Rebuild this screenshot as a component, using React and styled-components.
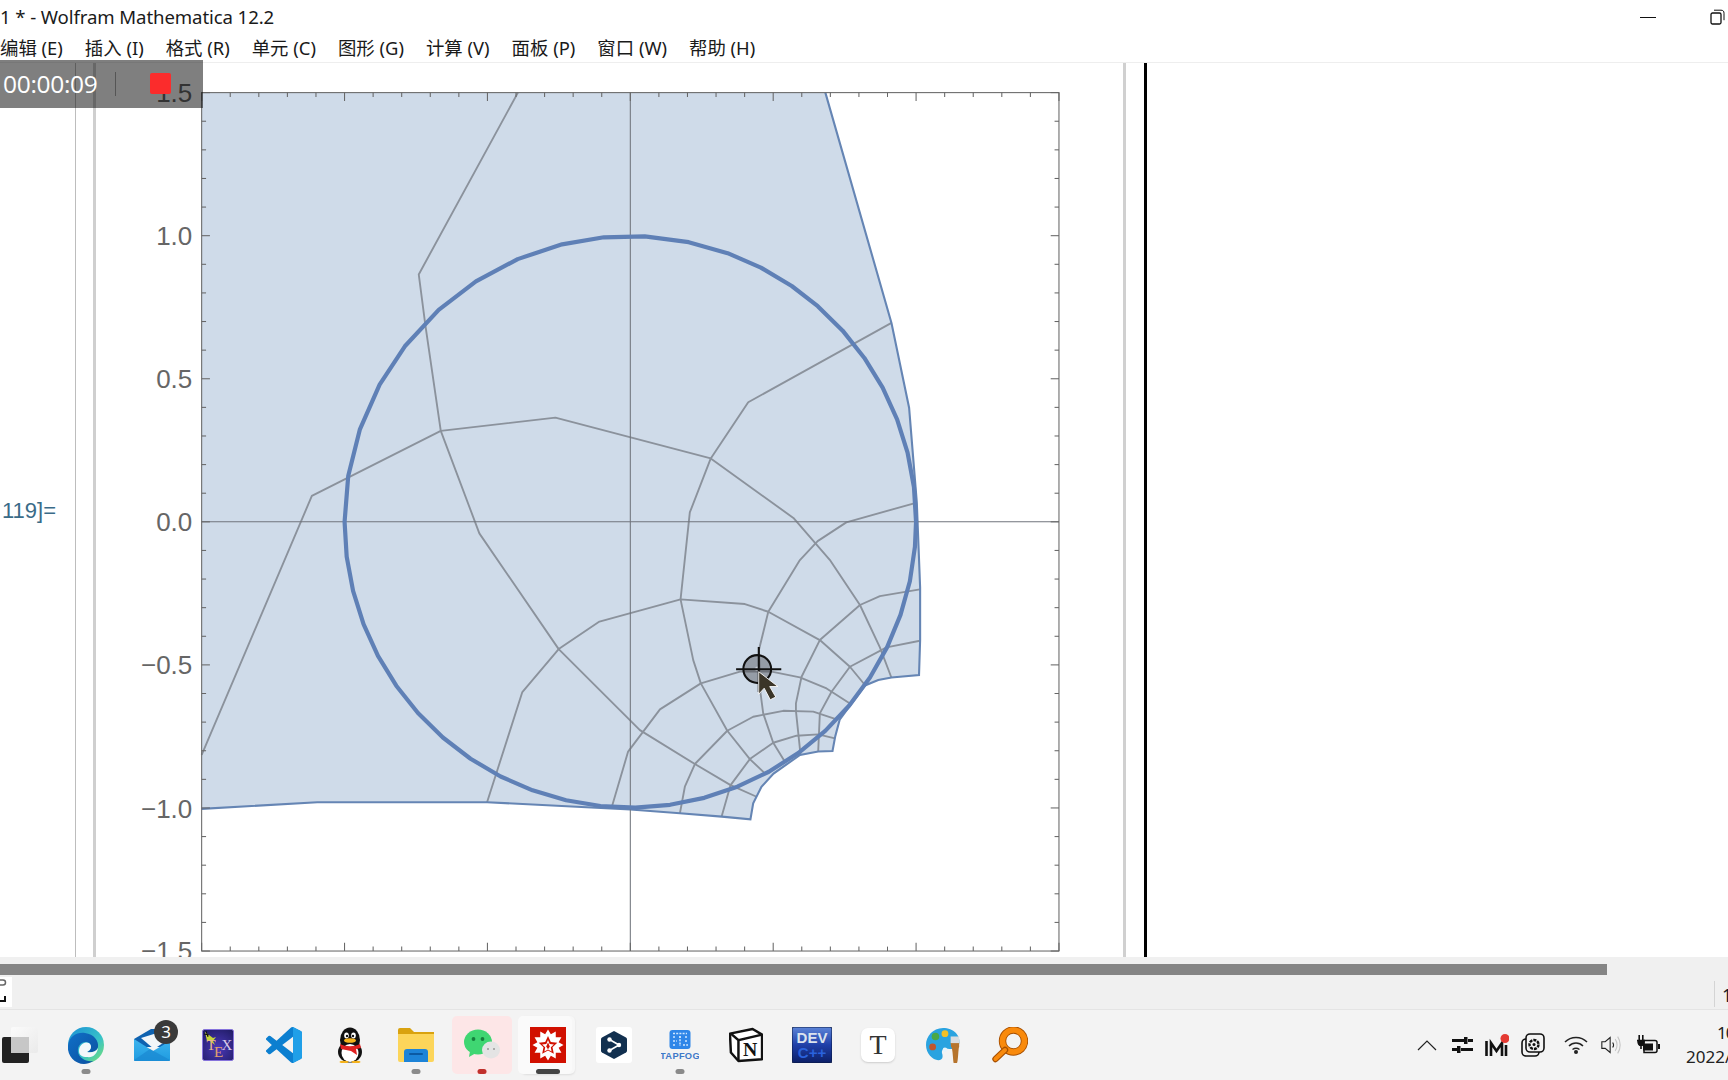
import React from "react";
import styled, { createGlobalStyle } from "styled-components";

const Global = createGlobalStyle`
  html, body { margin: 0; padding: 0; width: 1728px; height: 1080px; overflow: hidden; background: #fff; }
  * { box-sizing: border-box; }
`;

const UI_FONT = `"Noto Sans", "Noto Sans CJK SC", sans-serif`;

const App_ = styled.div`
  position: relative; width: 1728px; height: 1080px; overflow: hidden;
  display: flex; flex-direction: column; background: #fff; font-family: ${UI_FONT}; color: #1a1a1a;
`;
const TitleBar = styled.div`
  height: 34px; display: flex; align-items: center; justify-content: space-between; flex: none;
`;
const TitleText = styled.div`font-size: 18.6px; line-height: 34px; white-space: nowrap; letter-spacing: -0.1px;`;
const WindowControls = styled.div`display: flex; align-items: center; gap: 54px; padding-right: 3px;`;
const MinimizeGlyph = styled.div`width: 16px; height: 1px; background: #111;`;
const MenuBar = styled.div`
  height: 29px; display: flex; align-items: center; gap: 22px; flex: none;
  border-bottom: 1px solid #eeeeee;
`;
const MenuItem = styled.div`font-size: 18.4px; line-height: 26px; white-space: nowrap;`;
const Workspace = styled.div`height: 894px; flex: none; display: flex; overflow: hidden;`;
const Gutter = styled.div`
  width: 75px; flex: none; padding: 434px 0 0 2px; font-family: "Liberation Sans", sans-serif;
  font-size: 22px; line-height: 28px; color: #3a6b88;
`;
const CellLine = styled.div`
  flex: none; height: 100%; width: ${p => p.$w}px; background: ${p => p.$c}; margin-right: ${p => p.$after}px;
`;
const PlotWrap = styled.div`width: 1026px; height: 894px; flex: none; overflow: hidden;`;
const ScrollTrack = styled.div`height: 18px; flex: none; background: #f0f0f0; padding-top: 7px;`;
const ScrollThumb = styled.div`width: 1607px; height: 11px; background: #858585;`;
const StatusBar = styled.div`
  height: 35px; flex: none; background: #f0f0f0; border-bottom: 1px solid #e4e4e4;
  display: flex; align-items: center; justify-content: space-between;
`;
const StatusBox = styled.div`width: 12px; height: 30px; background: #fff; display: flex;`;
const StatusRight = styled.div`
  width: 14px; height: 26px; border-left: 1px solid #d4d4d4; padding-left: 7px;
  font-size: 18px; line-height: 28px; color: #1a1a2a; white-space: nowrap; margin-top: 4px;
`;
const TaskBar = styled.div`
  height: 70px; flex: none; background: #f3f3f3; display: flex; position: relative; align-items: stretch;
`;
const StartSlot = styled.div`width: 53px; flex: none; display: flex; align-items: center; padding: 0 13px 0 0; justify-content: center;`;
const Slot = styled.div`
  position: relative; width: 66px; flex: none; display: flex; align-items: center; justify-content: center;
`;
const Tile = styled.div`
  position: absolute; top: 6px; bottom: 6px; left: 3px; right: 3px; border-radius: 5px;
  background: ${p => p.$pink ? "#fde6e7" : "#fafafa"};
  box-shadow: ${p => p.$pink ? "none" : "3px 0 0 #f7f7f7, 3px 1px 2px #ddd"};
  width: ${p => p.$pink ? "60px" : "54px"};
`;
const IconHolder = styled.div`position: relative; width: 40px; height: 40px; display: flex; align-items: center; justify-content: center;`;
const Badge = styled.div`
  position: absolute; top: -5px; right: -6px; width: 24px; height: 24px; border-radius: 50%;
  background: #3a3a3a; color: #fff; font-size: 17px; line-height: 24px; text-align: center;
`;
const RunDot = styled.div`
  position: absolute; bottom: 6px; left: 50%; transform: translateX(-50%);
  height: 5px; border-radius: 3px; width: ${p => p.$wide ? "24px" : "9px"}; background: ${p => p.$c};
`;
const Tray = styled.div`
  position: absolute; left: 1409px; top: 0; height: 70px; display: flex; align-items: center;
`;
const TraySlot = styled.div`width: ${p => p.$w}px; display: flex; justify-content: center; flex: none;`;
const Clock = styled.div`
  position: absolute; left: 1686px; top: 11px; width: 42px; height: 50px; overflow: hidden;
  font-size: 17px; line-height: 24px; color: #222; white-space: nowrap;
`;
const ClockTime = styled.div`padding-left: 31px; letter-spacing: -1px;`;
const Recorder = styled.div`
  position: absolute; top: 60px; left: 0; width: 203px; height: 48px; background: rgba(0,0,0,.5);
  display: flex; align-items: center; color: #fff; padding-left: 3px;
`;
const RecTime = styled.div`
  width: 112px; font-size: 24.5px; line-height: 48px; letter-spacing: -0.3px; font-family: "Open Sans", sans-serif; white-space: nowrap;
`;
const RecSep = styled.div`width: 1px; height: 24px; background: #555;`;
const RecStop = styled.div`width: 21px; height: 21px; margin-left: 34px; margin-top: -2px; border-radius: 2px; background: #fb2c2c;`;

/* ---------- plot ---------- */
const X0 = 572, Y0 = 473.5, U = 259.33, L = 183, R = 961, T = 84, B = 863;
const FILL = [[183,84],[749,84],[809,293],[825,370],[832,456],[835,533],[835,581],[834,612.6],[809,614.7],[797,617],[785,622],[762,653],[758,668],[755.5,681.5],[742.5,682],[726,685],[702,702],[691,714],[683.5,729],[681,743.5],[655,741],[617,738],[572,734.5],[442,728],[365,728],[288,728],[183,734]];
const GRID = [
  [[470,84],[380,249],[386,295],[400,391],[435,484],[507,589],[580.7,662.5],[630.6,693.3],[663,712.4],[686.6,723]],
  [[183,685],[283,450],[400,391],[504,379],[645,416],[720,470],[753,508],[780.4,549],[798.5,587.5],[809,615]],
  [[809,293],[679,365],[645,416],[626,465],[617.6,543.9],[629.1,599],[636,620.1],[660,663.1],[680.5,688.8],[694.1,701.8]],
  [[832,456],[768,474],[742,491],[725.9,508.2],[697.2,555.1],[688.7,589.9],[690.2,629.2],[692.6,647.3],[701.7,674],[712.3,691.2]],
  [[834.8,534.8],[798.5,540.9],[780.4,549],[744,580.8],[727.4,614.1],[722.3,638.3],[722.3,645],[726.5,685]],
  [[834.8,581.4],[804.5,587.5],[771.3,605],[754.6,627.7],[744,647.3],[742.5,682]],
  [[442,728],[474,628],[507,589],[544,564],[617.6,543.9],[676,548.1],[697.2,555.1],[744,580.8],[771.3,605],[784.9,621.6]],
  [[555,733],[570,682],[598.9,643.7],[636,620.1],[671.5,609.5],[700.2,609.5],[725.9,614.7],[750.1,624.7],[771.3,638.3]],
  [[617,738.1],[621.5,713.9],[630.6,693.3],[660,663.1],[683.5,650.4],[710.8,645],[738,645.8],[759.2,652.8]],
  [[654.8,741.1],[663,712.4],[680.5,688.8],[701.7,674],[722.9,667.6],[742.5,666.4],[757.7,670]],
];
const pts = a => a.map(p => p.join(",")).join(" ");
const CIRCLE_TOP = [55.6, 62.8, 70.1, 78.2, 87.1, 95.3, 103.8, 113.2, 122.7, 132.1, 142.1, 151.3, 161.2, 170.8];
const circle = () => {
  const angles = [...CIRCLE_TOP];
  for (let a = 180; a < 360; a += 7) angles.push(a);
  for (let a = 0; a < 55; a += 7) angles.push(a);
  return pts(angles.map(d => {
    const a = d * Math.PI / 180;
    return [(X0 + Math.cos(a) * U).toFixed(1), (Y0 - Math.sin(a) * U).toFixed(1)];
  }));
};
const range = (n) => Array.from({ length: n }, (_, i) => i);
const Ticks = () => {
  const items = [];
  range(31).forEach(i => {
    const major = i % 5 === 0, len = major ? 7.5 : 4;
    const x = L + i * (R - L) / 30, y = T + i * (B - T) / 30;
    items.push(<line key={"t" + i} x1={x} x2={x} y1={T} y2={T + len} />);
    items.push(<line key={"b" + i} x1={x} x2={x} y1={B} y2={B - len} />);
    items.push(<line key={"l" + i} x1={L} x2={L + len} y1={y} y2={y} />);
    items.push(<line key={"r" + i} x1={R} x2={R - len} y1={y} y2={y} />);
  });
  return <g stroke="#666" strokeWidth="0.95">{items}</g>;
};
const LABELS = [["1.5", 84], ["1.0", 214], ["0.5", 344], ["0.0", 473.5], ["−0.5", 603.5], ["−1.0", 733.5], ["−1.5", 863]];
const Plot = () => (
  <svg width="1027" height="894" viewBox="88.02 57.17 932 811.2" style={{ display: "block" }}>
    <polygon points={pts(FILL)} fill="#cfdbe9" />
    <g fill="none" stroke="#8b929c" strokeWidth="1.7" strokeLinejoin="round">
      {GRID.map((g, i) => <polyline key={i} points={pts(g)} />)}
    </g>
    <polyline points={pts(FILL.slice(1))} fill="none" stroke="#6585b4" strokeWidth="1.9" />
    <line x1={X0} x2={X0} y1={T} y2={B} stroke="#70757c" strokeWidth="0.95" />
    <line x1={L} x2={R} y1={Y0} y2={Y0} stroke="#70757c" strokeWidth="0.95" />
    <polygon points={circle()} fill="none" stroke="#5f80b6" strokeWidth="3.8" strokeLinejoin="round" />
    <rect x={L} y={T} width={R - L} height={B - T} fill="none" stroke="#666" strokeWidth="0.95" />
    <Ticks />
    <g fontFamily='"Liberation Sans", sans-serif' fontSize="23.6" fill="#666" textAnchor="end">
      {LABELS.map(([t, y]) => <text key={t} x="174.5" y={y + 8.4}>{t}</text>)}
    </g>
    <circle cx="687.2" cy="607.1" r="12.6" fill="rgba(70,70,75,.42)" stroke="#111" strokeWidth="1.9" />
    <circle cx="687.4" cy="607" r="2.2" fill="#c9ced6" />
    <path d="M668 607.3H709M688.6 587V628" stroke="#111" strokeWidth="1.9" fill="none" />
    <path d="M688.5 609.5V630l5-5.5 5.5 10.5 5-2.5-5.5-9.5h7.5z" fill="#3b3528" stroke="#fff" strokeWidth=".8" />
  </svg>
);

/* ---------- taskbar icons ---------- */
const StartIcon = () => (
  <svg width="38" height="36" viewBox="0 0 38 36">
    <defs><linearGradient id="st" x1="0" y1="0" x2="1" y2="1"><stop offset="0" stopColor="#fbfbfb" /><stop offset="1" stopColor="#eaeaea" /></linearGradient></defs>
    <rect x="10" y="0" width="27" height="26" rx="2" fill="url(#st)" />
    <rect x="1" y="10" width="27" height="26" rx="2" fill="#222" />
    <rect x="10" y="10" width="18" height="16" fill="#c7c7c7" />
  </svg>
);
const EdgeIcon = () => (
  <svg width="38" height="38" viewBox="0 0 38 38">
    <defs>
      <linearGradient id="e1" x1="0" y1="0" x2="1" y2="1"><stop offset="0" stopColor="#1b8fd6" /><stop offset=".6" stopColor="#37c2c8" /><stop offset="1" stopColor="#7be36f" /></linearGradient>
      <linearGradient id="e2" x1="0" y1="0" x2="1" y2="1"><stop offset="0" stopColor="#1070c8" /><stop offset="1" stopColor="#0b4f9e" /></linearGradient>
    </defs>
    <circle cx="19" cy="19" r="18" fill="url(#e1)" />
    <path d="M1 20C2 10 10 6 18 7c9 1 14 8 13 14-1 5-8 6-11 5 5-2 5-7 2-9-5-3-12 1-11 9 1 6 8 10 15 9-3 2-6 3-9 3C8 38 0 30 1 20z" fill="url(#e2)" />
    <path d="M12 25c0-6 5-10 10-8 3 2 3 7-2 9 4 1 9 0 11-4-1 6-5 10-11 9-5 0-8-2-8-6z" fill="#f3f7fa" />
  </svg>
);
const MailIcon = () => (
  <svg width="36" height="32" viewBox="0 0 36 32">
    <defs><linearGradient id="ml" x1="0" y1="0" x2="0" y2="1"><stop offset="0" stopColor="#3db4ee" /><stop offset="1" stopColor="#1f9be0" /></linearGradient></defs>
    <path d="M0 10 17 0h4l15 10v8H0z" fill="#0f62b0" />
    <path d="M7 9l16-5 6 10-9 6z" fill="#f2f6f9" />
    <path d="M0 10l19 12L36 12v19a1 1 0 0 1-1 1H1a1 1 0 0 1-1-1z" fill="url(#ml)" />
    <path d="M36 31 16 20 0 31v0a1 1 0 0 0 1 1h34a1 1 0 0 0 1-1z" fill="#1885cf" opacity=".65" />
  </svg>
);
const TexIcon = () => (
  <svg width="32" height="32" viewBox="0 0 32 32">
    <defs><radialGradient id="tx" cx=".5" cy=".6" r=".8"><stop offset="0" stopColor="#4a38b8" /><stop offset="1" stopColor="#1d1a5e" /></radialGradient></defs>
    <rect x="0.5" y="0.5" width="31" height="31" rx="2" fill="url(#tx)" stroke="#8673dc" />
    <path d="M3 3l8 6 3-1-3 4 2 4-5-4-3 0z" fill="#c7d63a" />
    <path d="M4 2l2 6M2 5l5 1" stroke="#111" strokeWidth="1" />
    <text x="4.500" y="21" fontFamily='"Liberation Serif", serif' fontSize="15" fill="#e9b98e">T</text>
    <text x="12" y="27.500" fontFamily='"Liberation Serif", serif' fontSize="15" fill="#e0a06c">E</text>
    <text x="19.500" y="21" fontFamily='"Liberation Serif", serif' fontSize="15" fill="#d8c8e8">X</text>
  </svg>
);
const CodeIcon = () => (
  <svg width="36" height="36" viewBox="0 0 24 24">
    <path fill="#0c7fd0" d="M23.15 2.587L18.21.21a1.494 1.494 0 0 0-1.705.29l-9.46 8.63-4.12-3.128a.999.999 0 0 0-1.276.057L.327 7.261A1 1 0 0 0 .326 8.74L3.899 12 .326 15.26a1 1 0 0 0 .001 1.479L1.65 17.94a.999.999 0 0 0 1.276.057l4.12-3.128 9.46 8.63a1.492 1.492 0 0 0 1.704.29l4.942-2.377A1.5 1.5 0 0 0 24 20.06V3.939a1.5 1.5 0 0 0-.85-1.352zm-5.146 14.861L10.826 12l7.178-5.448v10.896z" />
    <path fill="#1f9fe8" d="M18.004.05l5.146 2.537A1.5 1.5 0 0 1 24 3.939V20.06a1.5 1.5 0 0 1-.85 1.352l-5.146 2.54V17.45V6.552z" />
  </svg>
);
const QQIcon = () => (
  <svg width="30" height="36" viewBox="0 0 30 36">
    <ellipse cx="15" cy="13" rx="10" ry="12.5" fill="#111" />
    <ellipse cx="15" cy="25" rx="12" ry="10.5" fill="#111" />
    <ellipse cx="15" cy="26" rx="8.5" ry="9" fill="#fff" />
    <ellipse cx="11.5" cy="8.5" rx="2.3" ry="3" fill="#fff" /><ellipse cx="18.5" cy="8.5" rx="2.3" ry="3" fill="#fff" />
    <circle cx="12" cy="9" r="1.2" fill="#111" /><circle cx="18" cy="9" r="1.2" fill="#111" />
    <ellipse cx="15" cy="13.5" rx="6" ry="2.3" fill="#f5b21b" />
    <path d="M5 17c6 3 14 3 20 0l1 4-5 1 1 6-6-4-10-2z" fill="#e02020" />
    <ellipse cx="9" cy="35" rx="4.5" ry="1.2" fill="#f5b21b" /><ellipse cx="21" cy="35" rx="4.5" ry="1.2" fill="#f5b21b" />
  </svg>
);
const FolderIcon = () => (
  <svg width="36" height="34" viewBox="0 0 36 34">
    <path d="M0 2a2 2 0 0 1 2-2h10l4 4h20v8H0z" fill="#d9a20f" />
    <path d="M0 6h36v26a2 2 0 0 1-2 2H2a2 2 0 0 1-2-2z" fill="#fcd55a" />
    <path d="M6 34V24a3 3 0 0 1 3-3h18a3 3 0 0 1 3 3v10z" fill="#1d84d8" />
    <rect x="11" y="25" width="14" height="2" rx="1" fill="#0b5aa3" />
  </svg>
);
const WeChatIcon = () => (
  <svg width="36" height="32" viewBox="0 0 36 32">
    <ellipse cx="14" cy="13" rx="14" ry="12.5" fill="#3fd672" />
    <path d="M6 22l-1 6 7-4z" fill="#3fd672" />
    <circle cx="9.5" cy="10" r="1.9" fill="#15803d" /><circle cx="18.5" cy="10" r="1.9" fill="#15803d" />
    <ellipse cx="27" cy="21" rx="9" ry="8.5" fill="#e4e4e4" />
    <circle cx="24" cy="20" r="1" fill="#999" /><circle cx="30" cy="20" r="1" fill="#999" />
  </svg>
);
const starPts = () => range(24).map(i => {
  const a = i * Math.PI / 12, r = i % 2 ? 11 : 15.5;
  return `${18 + Math.sin(a) * r},${18 - Math.cos(a) * r}`;
}).join(" ");
const WolframIcon = () => (
  <svg width="36" height="36" viewBox="0 0 36 36">
    <rect width="36" height="36" fill="#d11000" />
    <polygon points={starPts()} fill="#fff" />
    <path d="M18 9l2.800 6 6.500 .8-4.800 4.500 1.300 6.500-5.800-3.200-5.800 3.200 1.300-6.500-4.800-4.500 6.500-.8z" fill="#d11000" />
    <path d="M18 13l1.700 3.900 4.200 .5-3.100 2.900 .8 4.200-3.600-2-3.600 2 .8-4.200-3.100-2.900 4.200-.5z" fill="#fff" />
    <path d="M18 15.500l-1.800 4 1.800 2.800 1.800-2.800z" fill="#d11000" />
  </svg>
);
const HexIcon = () => (
  <svg width="36" height="36" viewBox="0 0 36 36">
    <rect width="36" height="36" rx="3" fill="#fff" />
    <path d="M18 4l12 6.500c.6 .4 1 1 1 1.700v11.600c0 .7-.4 1.300-1 1.700L18 32 6 25.500c-.6-.4-1-1-1-1.700V12.200c0-.7 .4-1.300 1-1.700z" fill="#12304f" />
    <path d="M13.500 12.500 23 18l-9.500 5.500" fill="none" stroke="#fff" strokeWidth="1.700" />
    <circle cx="13.500" cy="12.500" r="2.200" fill="#fff" /><circle cx="13.500" cy="23.500" r="2.200" fill="#fff" /><circle cx="23" cy="18" r="2.200" fill="#fff" />
  </svg>
);
const TapfogIcon = () => (
  <svg width="38" height="30" viewBox="0 0 38 30">
    <rect x="8.500" y="0" width="21" height="19" rx="3" fill="#2f86e8" />
    <path d="M12 3.500h14M12 7h3M18 7h2.500M24 7h3M12 11h4M19 6v10M24 11h3M12 15h3M22 15h5" stroke="#cfe6ff" strokeWidth="1.500" strokeDasharray="2 1.200" fill="none" />
    <text x="19" y="29" textAnchor="middle" fontFamily='"Liberation Sans", sans-serif' fontWeight="700" fontSize="9.300" letterSpacing=".3" fill="#3f79c9">TAPFOG</text>
  </svg>
);
const NotionIcon = () => (
  <svg width="34" height="36" viewBox="0 0 36 36">
    <path d="M1 6 25 1l10 6v26l-25 2-8-9z" fill="#fff" stroke="#111" strokeWidth="2.600" strokeLinejoin="round" />
    <path d="M2 6l8 7 25-6M10 13v21" fill="none" stroke="#111" strokeWidth="2.600" />
    <text x="22.500" y="30" textAnchor="middle" fontFamily='"Liberation Serif", serif' fontWeight="700" fontSize="21" fill="#111">N</text>
  </svg>
);
const DevIcon = () => (
  <svg width="40" height="36" viewBox="0 0 40 36">
    <defs><linearGradient id="dv" x1="0" y1="0" x2="0" y2="1"><stop offset="0" stopColor="#5c84d8" /><stop offset=".5" stopColor="#1f3fa8" /><stop offset="1" stopColor="#0c1f66" /></linearGradient></defs>
    <rect width="40" height="36" rx="2" fill="url(#dv)" stroke="#0a1a44" />
    <text x="20" y="15.500" textAnchor="middle" fontFamily='"Liberation Sans", sans-serif' fontWeight="700" fontSize="15" fill="#dbe3ee">DEV</text>
    <text x="20" y="31" textAnchor="middle" fontFamily='"Liberation Sans", sans-serif' fontWeight="700" fontSize="15" fill="#2a62dc">C++</text>
  </svg>
);
const TIconBox = styled.div`
  width: 34px; height: 34px; border-radius: 7px; background: #fff; box-shadow: 0 1px 2px #ccc;
  font-family: "Liberation Serif", serif; font-size: 28px; line-height: 34px; text-align: center; color: #333;
`;
const PaletteIcon = () => (
  <svg width="36" height="38" viewBox="0 0 38 38">
    <path d="M18 1C7 1 0 10 0 19c0 9 7 16 13 16 5 0 5-4 4-7-1-4 2-6 6-5 5 1 10 0 12-5 2-9-6-17-17-17z" fill="#2aa3e0" />
    <circle cx="7" cy="21" r="3.600" fill="#c2562d" /><circle cx="10" cy="10" r="4" fill="#4aa847" />
    <circle cx="20" cy="7" r="3.600" fill="#f2c027" /><circle cx="20" cy="24" r="2.400" fill="#e8f4fb" />
    <path d="M26 16h9v5c-1 1-1 17-2.500 17h-3c-1 0-1-16-3-17z" fill="#b6742c" />
    <path d="M26 10h9v7h-9z" fill="#d9dde0" />
  </svg>
);
const SearchIcon = () => (
  <svg width="36" height="36" viewBox="0 0 36 36">
    <circle cx="21.500" cy="14" r="11" fill="none" stroke="#a85000" strokeWidth="7.400" />
    <circle cx="21.500" cy="14" r="11" fill="none" stroke="#f98a0c" strokeWidth="5.600" />
    <path d="M13 23 3.500 32" stroke="#a85000" strokeWidth="6.400" strokeLinecap="round" />
    <path d="M13 23 3.500 32" stroke="#f98a0c" strokeWidth="4" strokeLinecap="round" />
  </svg>
);

const APPS = [
  { key: "edge", Icon: EdgeIcon, dot: "#8a8a8a" },
  { key: "mail", Icon: MailIcon, badge: "3" },
  { key: "tex", Icon: TexIcon },
  { key: "code", Icon: CodeIcon },
  { key: "qq", Icon: QQIcon },
  { key: "folder", Icon: FolderIcon, dot: "#8a8a8a" },
  { key: "wechat", Icon: WeChatIcon, dot: "#c0302c", tile: "pink" },
  { key: "wolfram", Icon: WolframIcon, dot: "#444", wide: true, tile: "white" },
  { key: "hex", Icon: HexIcon },
  { key: "tap", Icon: TapfogIcon, dot: "#8a8a8a" },
  { key: "notion", Icon: NotionIcon },
  { key: "dev", Icon: DevIcon },
  { key: "t", Icon: () => <TIconBox>T</TIconBox> },
  { key: "palette", Icon: PaletteIcon },
  { key: "search", Icon: SearchIcon },
];

const TRAY = [
  [<svg key="a" width="20" height="12" viewBox="0 0 20 12"><path d="M1 11 10 2l9 9" fill="none" stroke="#222" strokeWidth="1.200" /></svg>, 36],
  [<svg key="b" width="21" height="18" viewBox="0 0 21 18"><path d="M0 4.500h12M16 4.500h5M0 13.500h5M9 13.500h12" stroke="#111" strokeWidth="3" /><path d="M12 1h3.500v7H12zM5 10h3.500v7H5z" fill="#111" /></svg>, 34],
  [<svg key="c" width="24" height="23" viewBox="0 0 24 23"><path d="M1.500 7v15M6 22V9l5.500 8 5.500-8v13M21 11v11" fill="none" stroke="#111" strokeWidth="2.600" /><circle cx="20" cy="4.500" r="4.500" fill="#e43a32" /></svg>, 36],
  [<svg key="d" width="24" height="24" viewBox="0 0 24 24"><rect x="1" y="6" width="17" height="17" rx="4" fill="#f3f3f3" stroke="#111" strokeWidth="1.600" /><rect x="5" y="1" width="18" height="18" rx="4" fill="#f3f3f3" stroke="#111" strokeWidth="1.600" /><circle cx="13" cy="11.500" r="4.500" fill="none" stroke="#111" strokeWidth="2.400" strokeDasharray="3 1" /><circle cx="13" cy="11.500" r="1.500" fill="#111" /></svg>, 36],
  [<svg key="e" width="24" height="18" viewBox="0 0 24 18"><path d="M1 6c6-6 16-6 22 0M5 10c4-4 10-4 14 0M8.500 13.500c2-1.500 5-1.500 7 0" fill="none" stroke="#222" strokeWidth="1.500" /><circle cx="12" cy="16" r="2" fill="#222" /></svg>, 50],
  [<svg key="f" width="24" height="22" viewBox="0 0 24 22"><path d="M1 7h4l6-5v18l-6-5H1z" fill="none" stroke="#222" strokeWidth="1.300" /><path d="M14 8c1.500 2 1.500 4 0 6" fill="none" stroke="#222" strokeWidth="1.300" /><path d="M17 4c3 4 3 10 0 14M20 1c4 6 4 14 0 20" fill="none" stroke="#c4c4c4" strokeWidth="1.300" /></svg>, 20],
  [<svg key="g" width="24" height="20" viewBox="0 0 24 20"><path d="M1 5.500h8M3.200 0v5M6.800 0v5M2 5.500c0 4 1.500 5 3 5s3-1 3-5M5 10v4" stroke="#111" strokeWidth="1.600" fill="#111" /><path d="M8 5.500h11a2 2 0 0 1 2 2v8a2 2 0 0 1-2 2H8z" fill="none" stroke="#111" strokeWidth="1.500" /><path d="M7 8.500h10v7H7z" fill="#111" /><rect x="22" y="9" width="2" height="5" fill="#111" /></svg>, 54],
];

export default function App() {
  return (
    <App_>
      <Global />
      <TitleBar>
        <TitleText>1 * - Wolfram Mathematica 12.2</TitleText>
        <WindowControls>
          <MinimizeGlyph />
          <svg width="15" height="16" viewBox="0 0 15 16"><rect x="1" y="4" width="10" height="11" rx="1.500" fill="none" stroke="#111" strokeWidth="1.300" /><path d="M4 1.200h7c2 0 3 1 3 3v7" fill="none" stroke="#111" strokeWidth="1" /></svg>
        </WindowControls>
      </TitleBar>
      <MenuBar>
        {["编辑 (E)", "插入 (I)", "格式 (R)", "单元 (C)", "图形 (G)", "计算 (V)", "面板 (P)", "窗口 (W)", "帮助 (H)"].map(m => <MenuItem key={m}>{m}</MenuItem>)}
      </MenuBar>
      <Workspace>
        <Gutter>119]=</Gutter>
        <CellLine $w={1} $c="#bdbdbd" $after={17} />
        <CellLine $w={3} $c="#cfcfcf" $after={1} />
        <PlotWrap><Plot /></PlotWrap>
        <CellLine $w={3} $c="#d0d0d0" $after={18} />
        <CellLine $w={3} $c="#000" $after={0} />
      </Workspace>
      <ScrollTrack><ScrollThumb /></ScrollTrack>
      <StatusBar>
        <StatusBox>
          <svg width="12" height="30" viewBox="0 0 12 30"><path d="M0 3h3a2.500 2.500 0 0 1 0 5H0" fill="none" stroke="#666" strokeWidth="1.500" /><path d="M0 24h5v-5" fill="none" stroke="#111" strokeWidth="2" /></svg>
        </StatusBox>
        <StatusRight>1</StatusRight>
      </StatusBar>
      <TaskBar>
        <StartSlot><StartIcon /></StartSlot>
        {APPS.map(({ key, Icon, dot, wide, tile, badge }) => (
          <Slot key={key}>
            {tile && <Tile $pink={tile === "pink"} />}
            <IconHolder>
              <Icon />
              {badge && <Badge>{badge}</Badge>}
            </IconHolder>
            {dot && <RunDot $c={dot} $wide={wide} />}
          </Slot>
        ))}
        <Tray>
          {TRAY.map(([el, w], i) => <TraySlot key={i} $w={w}>{el}</TraySlot>)}
        </Tray>
        <Clock>
          <ClockTime>10</ClockTime>
          <div>2022/</div>
        </Clock>
      </TaskBar>
      <Recorder>
        <RecTime>00:00:09</RecTime>
        <RecSep />
        <RecStop />
      </Recorder>
    </App_>
  );
}
